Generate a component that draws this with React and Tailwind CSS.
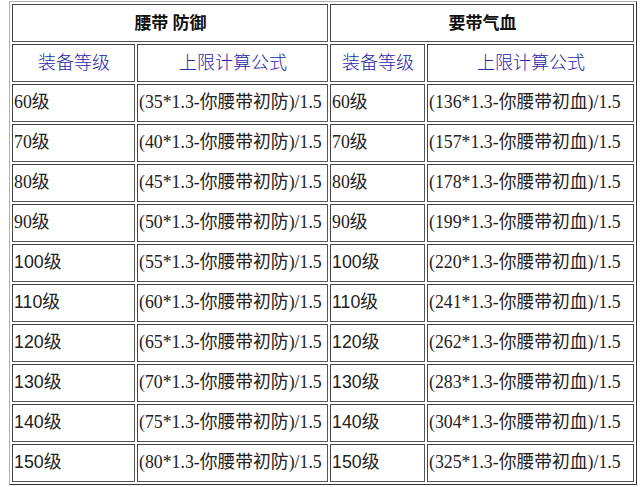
const levels = [60, 70, 80, 90, 100, 110, 120, 130, 140, 150];
const defBase = [35, 40, 45, 50, 55, 60, 65, 70, 75, 80];
const hpBase = [136, 157, 178, 199, 220, 241, 262, 283, 304, 325];

const serif = "font-['Liberation_Serif','Noto_Sans_CJK_SC',serif]";
const sans = "font-['Liberation_Sans','Noto_Sans_CJK_SC',sans-serif]";
const cell = "border border-t-[#444] border-l-[#444] border-b-[#555] border-r-[#555] p-0 pl-px h-[38px] leading-none whitespace-nowrap";
const body = `${cell} text-[17.8px] text-[#222]`;
const head = `${cell} ${sans} text-center text-[18px] font-light text-[#2626a8]`;
const title = `${cell} ${serif} text-center font-bold text-[17px] text-[#111]`;

function LevelCell({ level }) {
  // 60-90 render in serif digits, 100+ in sans, as in the original page
  return (
    <td className={`${body} ${level < 100 ? serif : sans}`}>
      {level}级
    </td>
  );
}

export default function App() {
  return (
    <div className="bg-white w-[642px] h-[487px] pl-[9px] pt-px overflow-hidden">
      <table className="table-fixed w-[628px] border-separate border-spacing-[2px] border border-t-[#b0b0b0] border-l-[#b0b0b0] border-b-[#333] border-r-[#333]">
        <colgroup>
          <col className="w-[123px]" />
          <col className="w-[191px]" />
          <col className="w-[95px]" />
          <col className="w-[207px]" />
        </colgroup>
        <tbody>
          <tr>
            <td colSpan={2} className={title}>腰带 防御</td>
            <td colSpan={2} className={title}>要带气血</td>
          </tr>
          <tr>
            <td className={head}>装备等级</td>
            <td className={head}>上限计算公式</td>
            <td className={head}>装备等级</td>
            <td className={head}>上限计算公式</td>
          </tr>
          {levels.map((lv, i) => (
            <tr key={lv}>
              <LevelCell level={lv} />
              <td className={`${body} ${serif}`}>({defBase[i]}*1.3-你腰带初防)/1.5</td>
              <LevelCell level={lv} />
              <td className={`${body} ${serif}`}>({hpBase[i]}*1.3-你腰带初血)/1.5</td>
            </tr>
          ))}
        </tbody>
      </table>
    </div>
  );
}
